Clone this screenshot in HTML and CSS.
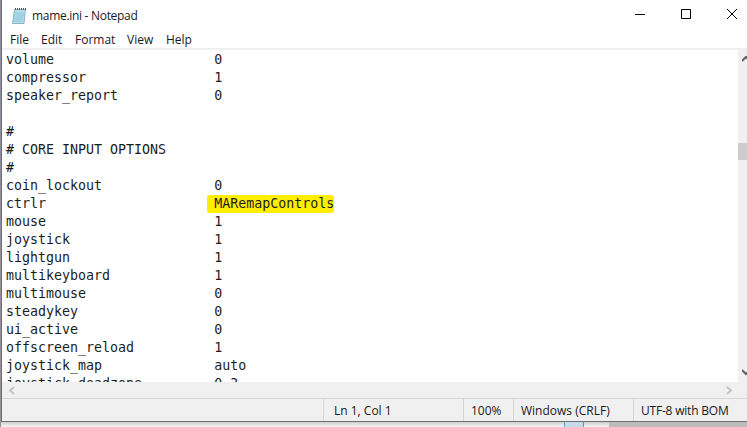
FILE: index.html
```html
<!DOCTYPE html>
<html lang="en">
<head>
<meta charset="utf-8">
<title>mame.ini - Notepad</title>
<link rel="stylesheet" href="styles.css">
</head>
<body>
<div class="stage">
  <div class="window">
    <header class="titlebar">
      <svg class="app-icon" width="16" height="17" viewBox="0 0 16 17">
        <path d="M3.500 2.500h11l-1.500 14H1.500z" fill="#b4e0ee" stroke="#8fb3c4" stroke-width="1"/>
        <path d="M3 6h10M2.800 8h10M2.600 10h10M2.400 12h10M2.200 14h10" stroke="#8ec6dc" stroke-width="1"/>
        <path d="M4.500 1v2M6.500 1v2M8.500 1v2M10.500 1v2M12.500 1v2M14.500 1v2" stroke="#5a5a5a" stroke-width="1"/>
      </svg>
      <span class="title">mame.ini - Notepad</span>
      <div class="controls">
        <svg class="ctrl" width="46" height="30" viewBox="0 0 46 30"><path d="M18 14.500h10" stroke="#000" fill="none"/></svg>
        <svg class="ctrl" width="46" height="30" viewBox="0 0 46 30"><path d="M18.500 9.500h9v9h-9z" stroke="#000" fill="none"/></svg>
        <svg class="ctrl" width="46" height="30" viewBox="0 0 46 30"><path d="M18 9l10 10M28 9L18 19" stroke="#000" fill="none"/></svg>
      </div>
    </header>
    <nav class="menubar">
      <span class="menu-file">File</span>
      <span class="menu-edit">Edit</span>
      <span class="menu-format">Format</span>
      <span class="menu-view">View</span>
      <span class="menu-help">Help</span>
    </nav>
    <div class="editor">
      <pre class="text">volume                    0
compressor                1
speaker_report            0

#
# CORE INPUT OPTIONS
#
coin_lockout              0
ctrlr                     <mark class="hl">MARemapControls</mark>
mouse                     1
joystick                  1
lightgun                  1
multikeyboard             1
multimouse                0
steadykey                 0
ui_active                 0
offscreen_reload          1
joystick_map              auto
joystick_deadzone         0.3</pre>
      <div class="vscroll">
        <svg class="varrow" width="9" height="8" viewBox="0 0 9 8"><path d="M0 6l4-4 4 4" stroke="#606060" stroke-width="2" fill="none"/></svg>
        <div class="vtrack"><div class="vthumb"></div></div>
        <svg class="varrow" width="9" height="8" viewBox="0 0 9 8"><path d="M0 2l4 4 4-4" stroke="#606060" stroke-width="2" fill="none"/></svg>
      </div>
    </div>
    <div class="hscroll">
      <svg width="8" height="9" viewBox="0 0 8 9"><path d="M6 1L2 4.500 6 8" stroke="#c4c4c4" stroke-width="2" fill="none"/></svg>
      <svg width="8" height="9" viewBox="0 0 8 9"><path d="M2 1l4 3.500L2 8" stroke="#c4c4c4" stroke-width="2" fill="none"/></svg>
    </div>
    <footer class="statusbar">
      <span class="cell cell-pos">Ln 1, Col 1</span>
      <span class="cell cell-zoom">100%</span>
      <span class="cell cell-eol">Windows (CRLF)</span>
      <span class="cell cell-enc">UTF-8 with BOM</span>
    </footer>
  </div>
  <div class="below">
    <div class="peek"></div>
    <div class="dark"></div>
  </div>
</div>
</body>
</html>
```

FILE: styles.css
```css
* { box-sizing: border-box; }
html, body { margin: 0; padding: 0; }
body {
  width: 747px;
  height: 427px;
  overflow: hidden;
  background: #fff;
  font-family: "Open Sans", "Noto Sans", sans-serif;
  color: #1a1a1a;
}
.stage {
  display: flex;
  flex-direction: column;
  height: 427px;
  padding-left: 1px;
  background: linear-gradient(#8c8ca0, #9a8f99);
  background-size: 1px 100%;
  background-repeat: no-repeat;
}
.window {
  height: 422px;
  flex: none;
  display: flex;
  flex-direction: column;
  background: #fff;
  border-left: 1px solid #6e6e6e;
  border-bottom: 1px solid #6e6e6e;
}
.titlebar {
  height: 30px;
  flex: none;
  display: flex;
  align-items: center;
  padding-left: 9px;
}
.app-icon { flex: none; }
.title {
  margin-left: 5px;
  font-size: 12px;
  letter-spacing: -0.3px;
  white-space: nowrap;
}
.controls {
  margin-left: auto;
  display: flex;
  margin-right: -8px;
}
.ctrl { display: block; }
.menubar {
  height: 18px;
  flex: none;
  display: flex;
  align-items: center;
  font-size: 12px;
  padding-left: 8px;
  padding-top: 1px;
}
.menu-file { width: 31px; }
.menu-edit { width: 34px; }
.menu-format { width: 52px; }
.menu-view { width: 39px; }
.editor {
  height: 334px;
  flex: none;
  display: flex;
  border-top: 2px solid #f0f0f0;
}
.text {
  flex: 1;
  margin: 0;
  padding: 1px 0 0 4px;
  overflow: hidden;
  font-family: "DejaVu Sans Mono", monospace;
  font-size: 13.3px;
  line-height: 18px;
  color: #1c1c1c;
}
.hl {
  display: inline-block;
  height: 18px;
  background: #ffee00;
  color: inherit;
  margin-left: -7px;
  padding-left: 7px;
  border-radius: 3px;
}
.vscroll {
  width: 9px;
  flex: none;
  background: #f0f0f0;
  display: flex;
  flex-direction: column;
  padding: 5px 0 6px;
  overflow: hidden;
}
.varrow {
  flex: none;
  display: block;
  margin-left: 4px;
}
.vtrack {
  flex: 1;
  padding-top: 80px;
}
.vthumb {
  height: 17px;
  background: #cdcdcd;
}
.hscroll {
  height: 16px;
  flex: none;
  display: flex;
  justify-content: space-between;
  align-items: center;
  background: #f0f0f0;
  padding: 0 14px 0 6px;
}
.statusbar {
  flex: 1;
  display: flex;
  align-items: center;
  background: #f0f0f0;
  border-top: 1px solid #d7d7d7;
  font-size: 12px;
  padding-left: 321px;
}
.cell {
  height: 100%;
  display: flex;
  align-items: center;
  padding-left: 10px;
  border-left: 1px solid #d7d7d7;
  white-space: nowrap;
}
.cell-pos { width: 140px; }
.cell-zoom { width: 50px; padding-left: 7px; }
.cell-eol { width: 120px; padding-left: 7px; }
.cell-enc { padding-left: 7px; letter-spacing: -0.2px; }
.below {
  flex: 1;
  display: flex;
  background: linear-gradient(#cfcfcf, #f6f6f6);
  position: relative;
}
.peek {
  position: absolute;
  left: 563px;
  top: 0;
  width: 20px;
  height: 5px;
  background: #c5dbe8;
  border-left: 1px solid #4f9fc9;
  border-right: 1px solid #4f9fc9;
}
.dark {
  position: absolute;
  left: 608px;
  right: 0;
  top: 0;
  bottom: 0;
  background: #bcbcbc;
}
```
